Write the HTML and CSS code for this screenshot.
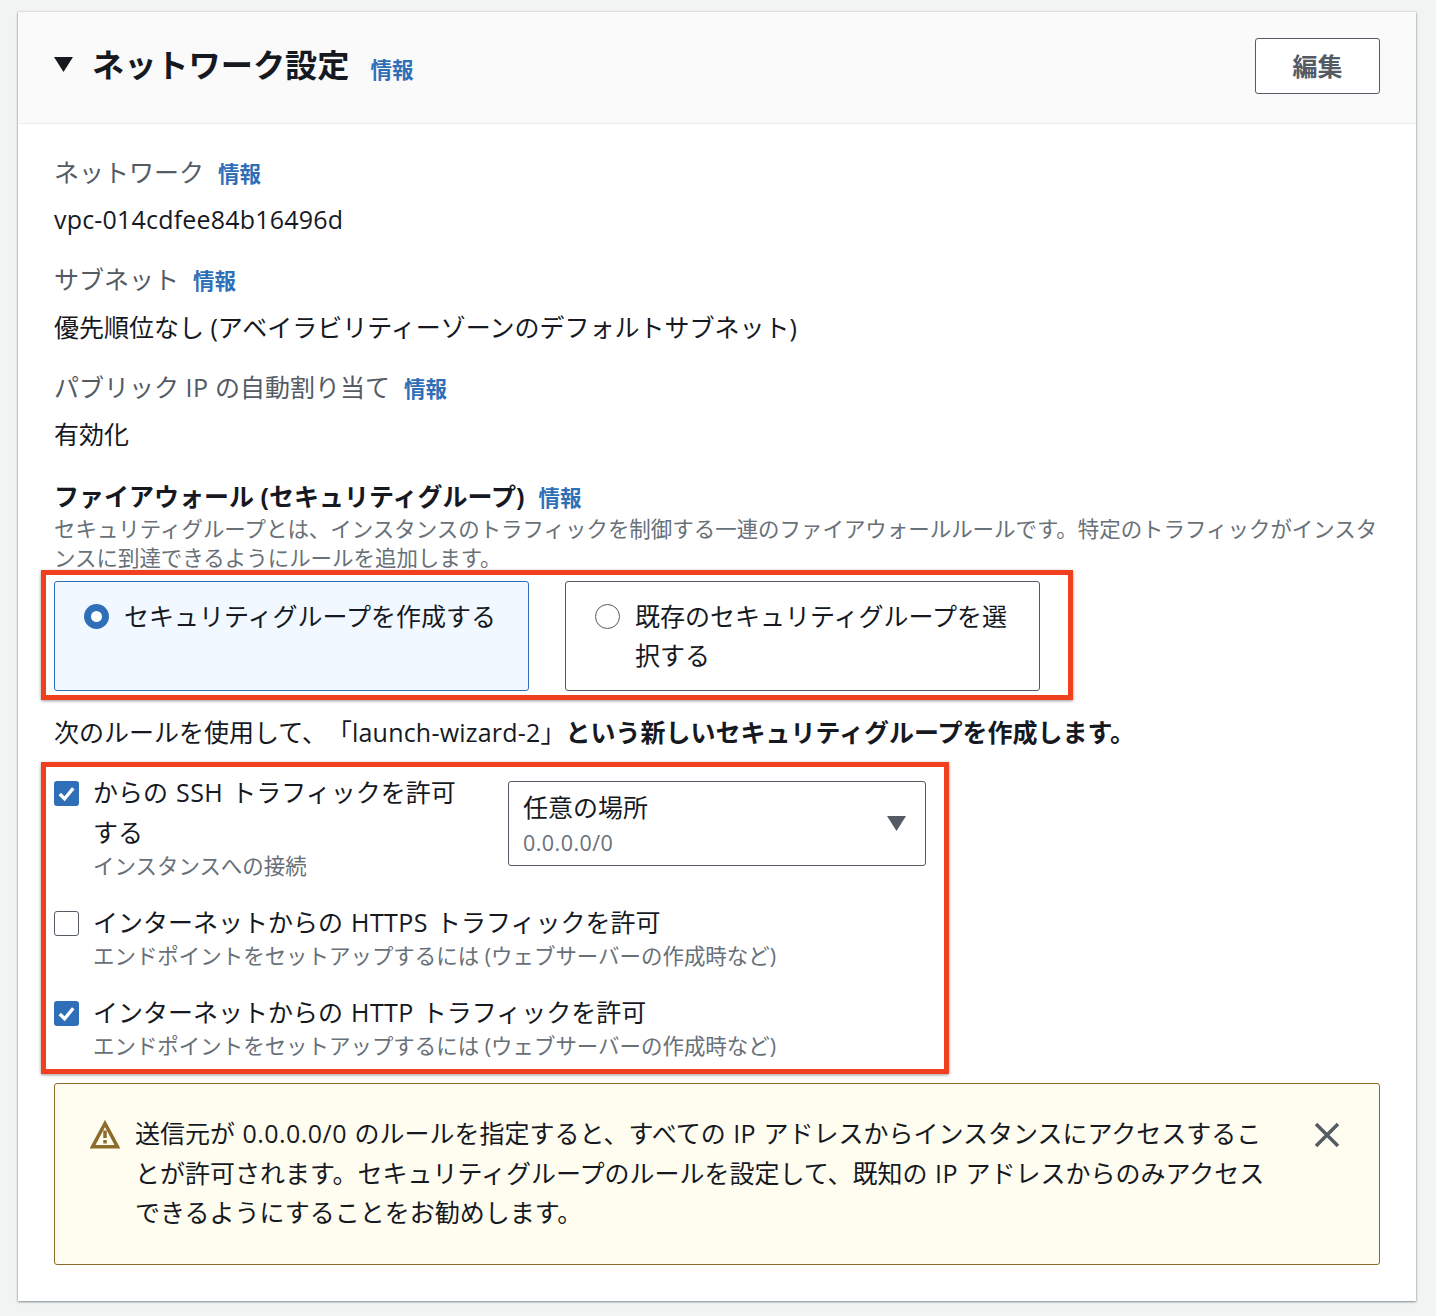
FILE: index.html
```html
<!DOCTYPE html>
<html lang="ja">
<head>
<meta charset="utf-8">
<title>ネットワーク設定</title>
<link rel="stylesheet" href="styles.css">
</head>
<body>
<section class="card">
  <header class="card-head">
    <div class="head-title">
      <svg class="caret" viewBox="0 0 19 15" aria-hidden="true"><path d="M0 0h19L9.500 15z"/></svg>
      <h2>ネットワーク設定</h2>
      <a class="info info-head">情報</a>
    </div>
    <button class="edit">編集</button>
  </header>
  <div class="card-body">
    <div class="label first">ネットワーク<a class="info">情報</a></div>
    <div class="value"><span class="vpc">vpc-014cdfee84b16496d</span></div>
    <div class="label">サブネット<a class="info">情報</a></div>
    <div class="value value-long">優先順位なし (アベイラビリティーゾーンのデフォルトサブネット)</div>
    <div class="label">パブリック <span class="lat">IP</span> の自動割り当て<a class="info">情報</a></div>
    <div class="value">有効化</div>
    <div class="label strong">ファイアウォール (セキュリティグループ)<a class="info">情報</a></div>
    <p class="desc">セキュリティグループとは、インスタンスのトラフィックを制御する一連のファイアウォールルールです。特定のトラフィックがインスタンスに到達できるようにルールを追加します。</p>

    <div class="tiles marked">
      <span class="mark mark-tiles"></span>
      <label class="tile selected">
        <span class="radio on"></span>
        <span>セキュリティグループを作成する</span>
      </label>
      <label class="tile">
        <span class="radio"></span>
        <span>既存のセキュリティグループを選択する</span>
      </label>
    </div>

    <p class="rule-note">次のルールを使用して、「<span class="vpc">launch-wizard-2</span>」<b>という新しいセキュリティグループを作成します。</b></p>

    <div class="rules marked">
      <span class="mark mark-rules"></span>
      <div class="rule-ssh">
        <div class="check-row ssh-check">
          <span class="check on"><svg viewBox="0 0 26 26" aria-hidden="true"><path d="M6 13.5l5 5 9-11"/></svg></span>
          <div>
            <div class="check-label">からの <span class="lat">SSH</span> トラフィックを許可<br>する</div>
            <div class="check-desc">インスタンスへの接続</div>
          </div>
        </div>
        <div class="select">
          <div>
            <div class="select-main">任意の場所</div>
            <div class="select-sub"><span class="lat">0.0.0.0/0</span></div>
          </div>
          <svg class="select-caret" viewBox="0 0 19 15" aria-hidden="true"><path d="M0 0h19L9.500 15z"/></svg>
        </div>
      </div>
      <div class="check-row row-next">
        <span class="check"></span>
        <div>
          <div class="check-label">インターネットからの <span class="lat">HTTPS</span> トラフィックを許可</div>
          <div class="check-desc">エンドポイントをセットアップするには (ウェブサーバーの作成時など)</div>
        </div>
      </div>
      <div class="check-row row-next">
        <span class="check on"><svg viewBox="0 0 26 26" aria-hidden="true"><path d="M6 13.5l5 5 9-11"/></svg></span>
        <div>
          <div class="check-label">インターネットからの <span class="lat">HTTP</span> トラフィックを許可</div>
          <div class="check-desc">エンドポイントをセットアップするには (ウェブサーバーの作成時など)</div>
        </div>
      </div>
    </div>

    <div class="alert">
      <svg class="warn" viewBox="0 0 30 29" aria-hidden="true">
        <path class="warn-tri" d="M15 3.500L2.500 26.800h25z"/>
        <path class="warn-bar" d="M15 10.500v7.500M15 20v3.500"/>
      </svg>
      <p class="alert-text">送信元が <span class="lat">0.0.0.0/0</span> のルールを指定すると、すべての <span class="lat">IP</span> アドレスからインスタンスにアクセスするこ<br>とが許可されます。セキュリティグループのルールを設定して、既知の <span class="lat">IP</span> アドレスからのみアクセス<br>できるようにすることをお勧めします。</p>
      <svg class="close" viewBox="0 0 26 26" aria-hidden="true"><path d="M2 2l22 22M24 2L2 24"/></svg>
    </div>
  </div>
</section>
</body>
</html>
```
FILE: styles.css
```css
* { box-sizing: border-box; }
html, body { margin: 0; height: 1316px; overflow: hidden; }
body {
  background: #f2f3f3;
  padding: 12px 20px 0 18px;
  font-family: "Open Sans", "Noto Sans CJK JP", sans-serif;
  font-size: 25px;
  color: #16191f;
  text-spacing-trim: space-all;
}
.lat { letter-spacing: .45px; }
.vpc { letter-spacing: .2px; }
.card {
  height: 1289px;
  background: #fff;
  box-shadow: 0 1px 2px rgba(60, 75, 85, .55), 0 0 2px rgba(60, 75, 85, .3);
}
.card-head {
  height: 112px;
  background: #fafafa;
  border-bottom: 1px solid #eaeded;
  display: flex;
  align-items: flex-start;
  justify-content: space-between;
  padding: 26px 36px 0 36px;
}
.head-title { display: flex; align-items: center; height: 56px; }
.caret { flex: none; width: 19px; height: 15px; fill: #16191f; margin-top: -3px; }
h2 {
  margin: -2px 0 0 19px;
  font-size: 32.2px;
  line-height: 56px;
  font-weight: 700;
}
.info {
  color: #2f6fb8;
  font-size: 21.5px;
  font-weight: 700;
  margin-left: 14px;
}
.info-head { margin-left: 21px; margin-top: 4px; }
.edit {
  width: 125px;
  height: 56px;
  background: #fff;
  border: 1px solid #545b64;
  border-radius: 3px;
  font: 700 25px "Open Sans", "Noto Sans CJK JP", sans-serif;
  color: #545b64;
  padding: 0 0 2px;
}
.card-body { padding: 30px 36px 0 36px; }
.label {
  line-height: 36px;
  color: #545b64;
  margin-top: 24px;
}
.label.first { margin-top: 0; }
.label.strong { color: #16191f; font-weight: 700; margin-top: 26px; }
.value { line-height: 36px; margin-top: 9px; }
.value-long { margin-top: 10px; }
.desc {
  margin: -2px 0 0;
  font-size: 21.46px;
  line-height: 29px;
  color: #687078;
}
.marked { position: relative; }
.mark {
  position: absolute;
  border: 5px solid #f0401f;
  box-shadow: 0 1px 3px rgba(0, 0, 0, .4);
  pointer-events: none;
}
.mark-tiles { left: -13px; top: -11px; width: 1032px; height: 130px; }
.mark-rules { left: -13px; top: -19px; width: 908px; height: 312px; }
.tiles {
  display: flex;
  gap: 36px;
  margin-top: 9px;
}
.tile {
  width: 475px;
  height: 110px;
  border: 1px solid #545b64;
  border-radius: 3px;
  padding: 15px 30px 0 29px;
  display: flex;
  align-items: flex-start;
  gap: 15px;
  line-height: 39px;
}
.tile.selected { background: #f1f8ff; border-color: #2f6fb8; }
.radio {
  flex: none;
  width: 25px;
  height: 25px;
  margin-top: 7px;
  border-radius: 50%;
  border: 1.500px solid #545b64;
  background: #fff;
}
.radio.on { border: 7px solid #2f6fb8; }
.rule-note { margin: 23px 0 0; line-height: 36px; }
.rule-note b { font-weight: 700; }
.rules { margin-top: 31px; }
.rule-ssh { display: flex; align-items: flex-start; }
.check-row { display: flex; align-items: flex-start; gap: 14px; }
.ssh-check { width: 454px; }
.check {
  flex: none;
  width: 25px;
  height: 25px;
  border: 1.500px solid #545b64;
  border-radius: 3px;
  background: #fff;
}
.check.on { background: #2f6fb8; border: 0; }
.check svg { display: block; width: 25px; height: 25px; fill: none; stroke: #fff; stroke-width: 3.500; }
.check-label { line-height: 40px; margin-top: -9px; word-spacing: 1.500px; }
.check-desc { font-size: 21.46px; line-height: 29px; color: #687078; margin-top: -1px; }
.row-next { margin-top: 31px; }
.select {
  width: 418px;
  height: 85px;
  border: 1px solid #545b64;
  border-radius: 3px;
  padding: 6px 19px 0 14px;
  display: flex;
  justify-content: space-between;
}
.select-main { line-height: 38px; }
.select-sub { font-size: 21.5px; line-height: 30px; color: #687078; margin-top: 2px; }
.select-caret { flex: none; width: 19px; height: 15px; fill: #545b64; margin-top: 28px; }
.alert {
  margin-top: 23px;
  height: 182px;
  background: #fffdf0;
  border: 1px solid #8d6c2b;
  border-radius: 3px;
  display: flex;
  align-items: flex-start;
  padding: 30px 39px 0 35px;
}
.warn { flex: none; width: 30px; height: 29px; margin-top: 6px; }
.warn-tri { fill: none; stroke: #8d6c2b; stroke-width: 3.500; stroke-linejoin: miter; }
.warn-bar { fill: none; stroke: #8d6c2b; stroke-width: 3.500; }
.alert-text { margin: 0 0 0 15px; width: 1130px; line-height: 39.500px; word-spacing: 1px; }
.close { flex: none; width: 26px; height: 26px; margin: 8px 0 0 auto; fill: none; stroke: #545b64; stroke-width: 3.500; }
```
